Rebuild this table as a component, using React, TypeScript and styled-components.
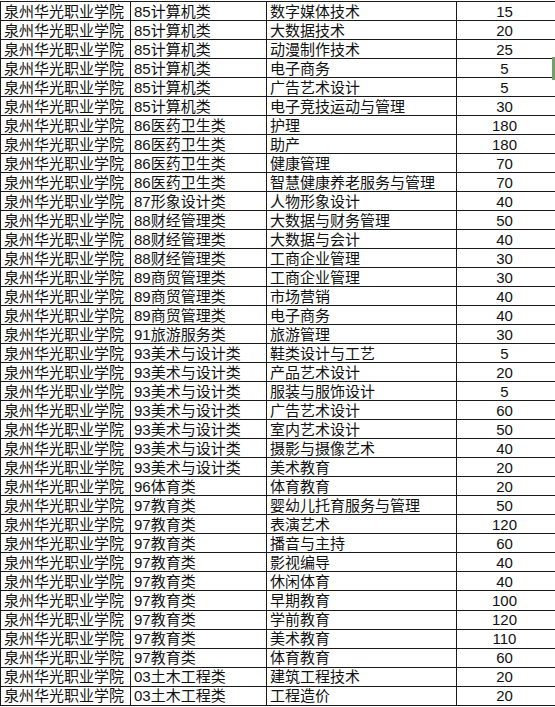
import React from "react";
import styled, { createGlobalStyle } from "styled-components";

const Global = createGlobalStyle`
  html, body { margin: 0; padding: 0; background: #ffffff; }
  body { font-family: "Liberation Sans", "Noto Sans CJK SC", sans-serif; }
`;

const Page = styled.div`
  position: relative;
  width: 555px;
  height: 707px;
  padding-top: 1px;
  box-sizing: border-box;
  overflow: hidden;
  background: #fff;
`;

const Grid = styled.div`
  display: grid;
  grid-template-columns: 130px 136px 190px 99px;
  grid-auto-rows: 19.03px;
  border-top: 1px solid #1a1a1a;
  border-left: 1px solid #1a1a1a;
  width: 555px;
  box-sizing: border-box;
`;

const Cell = styled.div<{ $align?: "left" | "center"; $last?: boolean }>`
  box-sizing: border-box;
  display: flex;
  align-items: center;
  justify-content: ${(p) => (p.$align === "center" ? "center" : "flex-start")};
  padding: 0 ${(p) => (p.$align === "center" ? "4px 0 0" : "0 0 3px")};
  border-bottom: 1px solid #1a1a1a;
  border-right: ${(p) => (p.$last ? "none" : "1px solid #1a1a1a")};
  font-size: 15px;
  line-height: 1;
  color: #111;
  white-space: nowrap;
  overflow: hidden;
`;

const SelectionMark = styled.div`
  position: absolute;
  right: 0;
  top: 57px;
  width: 3px;
  height: 23px;
  background: #72a067;
`;

const rows: [string, string, string][] = [
  ["85计算机类", "数字媒体技术", "15"],
  ["85计算机类", "大数据技术", "20"],
  ["85计算机类", "动漫制作技术", "25"],
  ["85计算机类", "电子商务", "5"],
  ["85计算机类", "广告艺术设计", "5"],
  ["85计算机类", "电子竞技运动与管理", "30"],
  ["86医药卫生类", "护理", "180"],
  ["86医药卫生类", "助产", "180"],
  ["86医药卫生类", "健康管理", "70"],
  ["86医药卫生类", "智慧健康养老服务与管理", "70"],
  ["87形象设计类", "人物形象设计", "40"],
  ["88财经管理类", "大数据与财务管理", "50"],
  ["88财经管理类", "大数据与会计", "40"],
  ["88财经管理类", "工商企业管理", "30"],
  ["89商贸管理类", "工商企业管理", "30"],
  ["89商贸管理类", "市场营销", "40"],
  ["89商贸管理类", "电子商务", "40"],
  ["91旅游服务类", "旅游管理", "30"],
  ["93美术与设计类", "鞋类设计与工艺", "5"],
  ["93美术与设计类", "产品艺术设计", "20"],
  ["93美术与设计类", "服装与服饰设计", "5"],
  ["93美术与设计类", "广告艺术设计", "60"],
  ["93美术与设计类", "室内艺术设计", "50"],
  ["93美术与设计类", "摄影与摄像艺术", "40"],
  ["93美术与设计类", "美术教育", "20"],
  ["96体育类", "体育教育", "20"],
  ["97教育类", "婴幼儿托育服务与管理", "50"],
  ["97教育类", "表演艺术", "120"],
  ["97教育类", "播音与主持", "60"],
  ["97教育类", "影视编导", "40"],
  ["97教育类", "休闲体育", "40"],
  ["97教育类", "早期教育", "100"],
  ["97教育类", "学前教育", "120"],
  ["97教育类", "美术教育", "110"],
  ["97教育类", "体育教育", "60"],
  ["03土木工程类", "建筑工程技术", "20"],
  ["03土木工程类", "工程造价", "20"],
];

export default function App() {
  return (
    <>
      <Global />
      <Page>
        <Grid>
          {rows.map(([cat, major, num], i) => (
            <React.Fragment key={i}>
              <Cell>泉州华光职业学院</Cell>
              <Cell>{cat}</Cell>
              <Cell>{major}</Cell>
              <Cell $align="center" $last>
                {num}
              </Cell>
            </React.Fragment>
          ))}
        </Grid>
        <SelectionMark />
      </Page>
    </>
  );
}
